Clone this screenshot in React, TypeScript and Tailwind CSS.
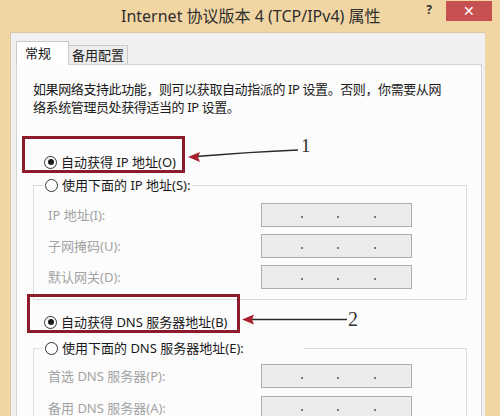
const font = { fontFamily: '"Noto Sans", "Noto Sans CJK SC", sans-serif' };

function Radio({ checked }: { checked?: boolean }) {
  return (
    <span className="flex h-[13px] w-[13px] shrink-0 items-center justify-center rounded-full border border-[#333] bg-white">
      {checked && <span className="h-[6px] w-[6px] rounded-full bg-[#1c1c1c]" />}
    </span>
  );
}

function IpBox() {
  return (
    <div className="flex h-[24px] w-[151px] items-end border border-[#adadad] bg-[#ececec] pb-[8px] pl-[39px]">
      <span className="h-[2px] w-[2px] rounded-full bg-[#555]" />
      <span className="ml-[34px] h-[2px] w-[2px] rounded-full bg-[#555]" />
      <span className="ml-[35px] h-[2px] w-[2px] rounded-full bg-[#555]" />
    </div>
  );
}

function Row({ label }: { label: string }) {
  return (
    <div className="flex items-center">
      <span className="w-[213px] text-[13px] leading-[18px] text-[#a3a3a3]">{label}</span>
      <IpBox />
    </div>
  );
}

export default function App() {
  return (
    <div className="relative h-[416px] w-[500px] overflow-hidden bg-[#f1d6a4]" style={font}>
      {/* title bar */}
      <div className="relative flex h-[32px] items-center">
        <div className="ml-[121px] text-[16px] leading-[20px] text-[#2e2e2e]">Internet 协议版本 4 (TCP/IPv4) 属性</div>
        <div className="ml-auto mr-[8px] mt-[-10px] flex items-start">
          <span className="mr-[14px] text-[12px] font-bold text-[#333]">?</span>
          <div className="flex h-[20px] w-[46px] items-center justify-center bg-[#c75050] text-[14px] leading-none text-white">✕</div>
        </div>
      </div>

      {/* body */}
      <div className="ml-[10px] h-[390px] w-[475px] border-l border-t border-[#d8c7a5] bg-[#f0f0f0] pt-[8px]">
        {/* tabs */}
        <div className="ml-[5px] flex items-end">
          <div className="relative z-10 mb-[-1px] flex h-[24px] w-[53px] items-start border border-b-0 border-[#c9c9c9] bg-white pl-[8px] pt-[1px] text-[13px] leading-[20px] text-[#111]">
            常规
          </div>
          <div className="flex h-[19px] w-[59px] items-center justify-center border border-b-0 border-l-0 border-[#c9c9c9] bg-[#ececec] text-[13px] leading-[18px] text-[#222]">
            备用配置
          </div>
        </div>

        {/* panel */}
        <div className="ml-[5px] h-[360px] w-[466px] border border-[#d4d4d4] bg-[#fcfcfc] px-[16px] pt-[15px]">
          <p className="whitespace-nowrap text-[13px] leading-[18px] tracking-[-0.4px] text-[#1a1a1a]">
            如果网络支持此功能，则可以获取自动指派的 IP 设置。否则，你需要从网
            <br />
            络系统管理员处获得适当的 IP 设置。
          </p>

          <div className="ml-[11px] mt-[37px] flex h-[18px] items-center gap-[4px] text-[13px] leading-[18px] text-[#1a1a1a]">
            <Radio checked />
            <span>自动获得 IP 地址(O)</span>
          </div>

          <fieldset className="mt-[5px] w-[434px] border border-[#dcdcdc] pb-[10px] pl-[14px]">
            <legend className="ml-[-5px] flex h-[18px] items-center gap-[4px] px-[2px] text-[13px] leading-[18px] text-[#1a1a1a]">
              <Radio />
              <span>使用下面的 IP 地址(S):</span>
            </legend>
            <div className="mt-[9px] flex flex-col gap-[7px]">
              <Row label="IP 地址(I):" />
              <Row label="子网掩码(U):" />
              <Row label="默认网关(D):" />
            </div>
          </fieldset>

          <div className="ml-[11px] mt-[13px] flex h-[18px] items-center gap-[4px] text-[13px] leading-[18px] text-[#1a1a1a]">
            <Radio checked />
            <span>自动获得 DNS 服务器地址(B)</span>
          </div>

          <fieldset className="mt-[8px] w-[434px] border border-[#dcdcdc] pb-[10px] pl-[14px]">
            <legend className="ml-[-5px] flex h-[18px] items-center gap-[4px] pl-[2px] pr-[60px] text-[13px] leading-[18px] text-[#1a1a1a]">
              <Radio />
              <span>使用下面的 DNS 服务器地址(E):</span>
            </legend>
            <div className="mt-[7px] flex flex-col gap-[8px]">
              <Row label="首选 DNS 服务器(P):" />
              <Row label="备用 DNS 服务器(A):" />
            </div>
          </fieldset>
        </div>
      </div>

      {/* annotations */}
      <div className="absolute left-[22px] top-[136px] h-[37px] w-[163px] border-[3px] border-[#8c1c2c]" />
      <div className="absolute left-[27px] top-[294px] h-[39px] w-[213px] border-[3px] border-[#8c1c2c]" />
      <svg className="pointer-events-none absolute left-0 top-0" width="500" height="416">
        <path d="M196 156.5 Q250 152 298 150" stroke="#2a2a2a" strokeWidth="1.3" fill="none" />
        <path d="M188 157 L200 152 L198 157 L200 162 Z" fill="#a8202e" />
        <path d="M250 319.5 L347 319.5" stroke="#2a2a2a" strokeWidth="1.3" fill="none" />
        <path d="M242 319.5 L254 314.5 L252 319.5 L254 324.5 Z" fill="#a8202e" />
      </svg>
      <span className="absolute left-[301px] top-[135px] text-[19px] leading-[22px] text-[#333]" style={{ fontFamily: '"Liberation Serif", serif' }}>1</span>
      <span className="absolute left-[348px] top-[308px] text-[20px] leading-[22px] text-[#333]" style={{ fontFamily: '"Liberation Serif", serif' }}>2</span>
    </div>
  );
}
